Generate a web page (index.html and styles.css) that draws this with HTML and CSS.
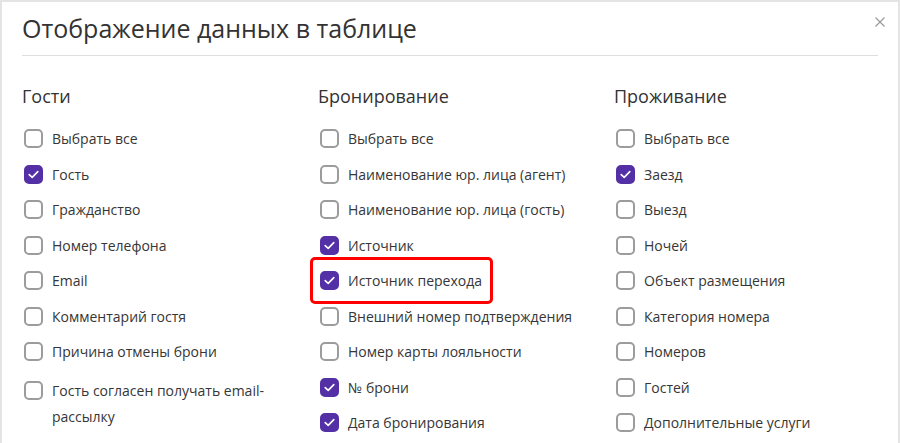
FILE: index.html
```html
<!DOCTYPE html>
<html lang="ru">
<head>
  <meta charset="UTF-8">
  <title>Отображение данных в таблице</title>
  <link rel="stylesheet" href="styles.css">
</head>
<body>
  <div class="modal">
    <button class="close" aria-label="Закрыть">
      <svg width="10" height="10" viewBox="0 0 10 10"><path d="M0.5 0.5 L9.5 9.5 M9.5 0.5 L0.5 9.5" stroke="#9a9a9a" stroke-width="1.2" fill="none"/></svg>
    </button>

    <h1 class="title">Отображение данных в таблице</h1>

    <div class="columns">
      <div class="column">
        <h2>Гости</h2>
        <label class="check"><span class="box"></span>Выбрать все</label>
        <label class="check"><span class="box on"><svg viewBox="0 0 19 19"><path d="M5.2 9.6 L8.2 12.4 L13.8 6.6"/></svg></span>Гость</label>
        <label class="check"><span class="box"></span>Гражданство</label>
        <label class="check"><span class="box"></span>Номер телефона</label>
        <label class="check"><span class="box"></span>Email</label>
        <label class="check"><span class="box"></span>Комментарий гостя</label>
        <label class="check"><span class="box"></span>Причина отмены брони</label>
        <label class="check multi"><span class="box"></span>Гость согласен получать email-рассылку</label>
      </div>

      <div class="column">
        <h2>Бронирование</h2>
        <label class="check"><span class="box"></span>Выбрать все</label>
        <label class="check"><span class="box"></span>Наименование юр. лица (агент)</label>
        <label class="check"><span class="box"></span>Наименование юр. лица (гость)</label>
        <label class="check"><span class="box on"><svg viewBox="0 0 19 19"><path d="M5.2 9.6 L8.2 12.4 L13.8 6.6"/></svg></span>Источник</label>
        <label class="check marked"><span class="box on"><svg viewBox="0 0 19 19"><path d="M5.2 9.6 L8.2 12.4 L13.8 6.6"/></svg></span>Источник перехода</label>
        <label class="check"><span class="box"></span>Внешний номер подтверждения</label>
        <label class="check"><span class="box"></span>Номер карты лояльности</label>
        <label class="check"><span class="box on"><svg viewBox="0 0 19 19"><path d="M5.2 9.6 L8.2 12.4 L13.8 6.6"/></svg></span>№ брони</label>
        <label class="check"><span class="box on"><svg viewBox="0 0 19 19"><path d="M5.2 9.6 L8.2 12.4 L13.8 6.6"/></svg></span>Дата бронирования</label>
      </div>

      <div class="column">
        <h2>Проживание</h2>
        <label class="check"><span class="box"></span>Выбрать все</label>
        <label class="check"><span class="box on"><svg viewBox="0 0 19 19"><path d="M5.2 9.6 L8.2 12.4 L13.8 6.6"/></svg></span>Заезд</label>
        <label class="check"><span class="box"></span>Выезд</label>
        <label class="check"><span class="box"></span>Ночей</label>
        <label class="check"><span class="box"></span>Объект размещения</label>
        <label class="check"><span class="box"></span>Категория номера</label>
        <label class="check"><span class="box"></span>Номеров</label>
        <label class="check"><span class="box"></span>Гостей</label>
        <label class="check"><span class="box"></span>Дополнительные услуги</label>
      </div>
    </div>
  </div>
</body>
</html>
```

FILE: styles.css
```css
body {
  margin: 0;
  padding: 0;
  background: #fff;
  font-family: 'Open Sans', 'Noto Sans', sans-serif;
  color: #363636;
  overflow: hidden;
}

.modal {
  position: relative;
  min-height: 600px;
  padding: 8px 20px 0;
  border: 2px solid #e4e4e4;
  border-bottom: none;
  background: #fff;
}

.close {
  position: absolute;
  top: 15px;
  right: 13px;
  width: 10px;
  height: 10px;
  padding: 0;
  border: none;
  background: none;
  line-height: 0;
  cursor: pointer;
}

.title {
  margin: 0;
  padding-bottom: 9px;
  border-bottom: 1px solid #dedede;
  font-size: 25px;
  font-weight: 400;
  line-height: 36px;
  color: #333;
}

.columns {
  display: grid;
  grid-template-columns: 280px 280px 280px;
  column-gap: 16px;
  padding-top: 27px;
}

.column {
  display: flex;
  flex-direction: column;
  gap: 10.5px;
}

.column h2 {
  margin: 0 0 6.5px;
  font-size: 18px;
  font-weight: 400;
  line-height: 26px;
  color: #333;
}

.check {
  position: relative;
  display: flex;
  align-items: center;
  gap: 9px;
  font-size: 14px;
  line-height: 25px;
  cursor: pointer;
}

.check.multi {
  align-items: flex-start;
  padding-top: 3px;
  margin-bottom: 8px;
  line-height: 26px;
}

.check.multi .box {
  margin-top: 3.5px;
}

.box {
  flex: none;
  box-sizing: border-box;
  width: 19px;
  height: 19px;
  margin-left: 2px;
  border: 2px solid #9c9c9c;
  border-radius: 5px;
  background: #fff;
}

.box.on {
  border-color: #5430a6;
  background: #5430a6;
}

.box svg {
  display: block;
  width: 19px;
  height: 19px;
  margin: -2px;
}

.box svg path {
  fill: none;
  stroke: #fff;
  stroke-width: 1.6;
  stroke-linecap: round;
  stroke-linejoin: round;
}

.check.marked::after {
  content: "";
  position: absolute;
  left: -8px;
  top: -11.5px;
  width: 183px;
  height: 47px;
  box-sizing: border-box;
  border: 3px solid #f00;
  border-radius: 5px;
  pointer-events: none;
}
```
